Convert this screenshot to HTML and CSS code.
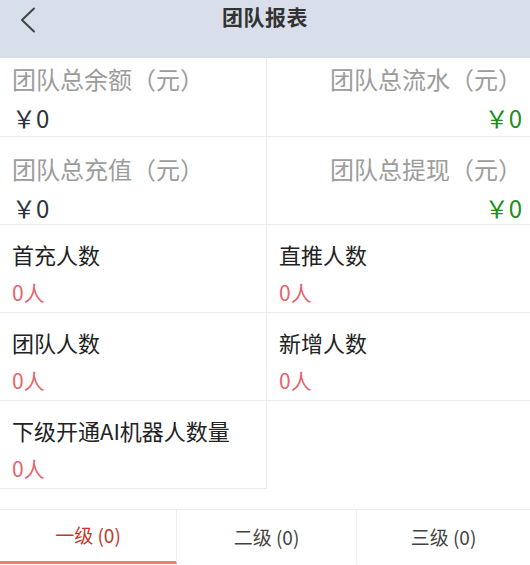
FILE: index.html
```html
<!DOCTYPE html>
<html lang="zh">
<head>
<meta charset="utf-8">
<title>团队报表</title>
<link rel="stylesheet" href="styles.css">
</head>
<body>
<header class="topbar">
  <span class="back">
    <svg width="16" height="26" viewBox="0 0 16 26"><path d="M14 1.5 L2 13 L14 24.5" fill="none" stroke="#444" stroke-width="2" stroke-linecap="round" stroke-linejoin="round"/></svg>
  </span>
  <h1 class="title">团队报表</h1>
</header>
<main class="grid">
  <div class="cell money first left">
    <div class="label muted">团队总余额（元）</div>
    <div class="value dark">￥0</div>
  </div>
  <div class="cell money first right">
    <div class="label muted">团队总流水（元）</div>
    <div class="value green">￥0</div>
  </div>
  <div class="cell money left">
    <div class="label muted">团队总充值（元）</div>
    <div class="value dark">￥0</div>
  </div>
  <div class="cell money right">
    <div class="label muted">团队总提现（元）</div>
    <div class="value green">￥0</div>
  </div>
  <div class="cell count left">
    <div class="label">首充人数</div>
    <div class="value red">0人</div>
  </div>
  <div class="cell count">
    <div class="label">直推人数</div>
    <div class="value red">0人</div>
  </div>
  <div class="cell count left">
    <div class="label">团队人数</div>
    <div class="value red">0人</div>
  </div>
  <div class="cell count">
    <div class="label">新增人数</div>
    <div class="value red">0人</div>
  </div>
  <div class="cell count left">
    <div class="label">下级开通AI机器人数量</div>
    <div class="value red">0人</div>
  </div>
</main>
<nav class="tabs">
  <div class="tab active">一级 (0)</div>
  <div class="tab">二级 (0)</div>
  <div class="tab">三级 (0)</div>
</nav>
</body>
</html>
```
FILE: styles.css
```css
* { box-sizing: border-box; }
html, body { margin: 0; padding: 0; background: #fff; }
body {
  font-family: "Noto Sans CJK SC", "Noto Sans", sans-serif;
  width: 530px;
  overflow: hidden;
}
.topbar {
  height: 58px;
  background: #d8dfea;
  display: flex;
  align-items: flex-start;
  justify-content: center;
  position: relative;
}
.back {
  position: absolute;
  left: 20px;
  top: 7px;
  display: flex;
}
.title {
  margin: 0;
  font-size: 21px;
  font-weight: bold;
  color: #333;
  line-height: 32px;
  letter-spacing: 0.5px;
}
.grid {
  display: grid;
  grid-template-columns: 267px 263px;
}
.cell {
  border-bottom: 1px solid #ececec;
  height: 88px;
  padding: 12px 8px 0 12px;
  display: flex;
  flex-direction: column;
}
.cell.money { padding-top: 15px; }
.cell.first { height: 79px; padding-top: 4px; }
.cell.left { border-right: 1px solid #ececec; }
.cell.right { align-items: flex-end; }
.label {
  font-size: 22px;
  line-height: 34px;
  color: #222;
}
.label.muted { font-size: 24px; color: #9c9c9c; }
.value { margin-top: 3px; }
.money .value {
  font-size: 24px;
  line-height: 38px;
}
.count .value {
  font-size: 21px;
  line-height: 34px;
  margin-top: 4px;
}
.dark { color: #2c3440; }
.green { color: #1c8f1c; }
.red { color: #e5656b; }
.tabs {
  margin-top: 20px;
  display: grid;
  grid-template-columns: 177px 180px 173px;
  border-top: 1px solid #eeeeee;
  height: 55px;
}
.tab {
  display: flex;
  align-items: center;
  justify-content: center;
  font-size: 19px;
  color: #444;
  border-right: 1px solid #eeeeee;
  padding-bottom: 2px;
}
.tab:last-child { border-right: none; }
.tab.active {
  color: #c0392b;
  border-bottom: 3px solid #ef7d6e;
}
```
